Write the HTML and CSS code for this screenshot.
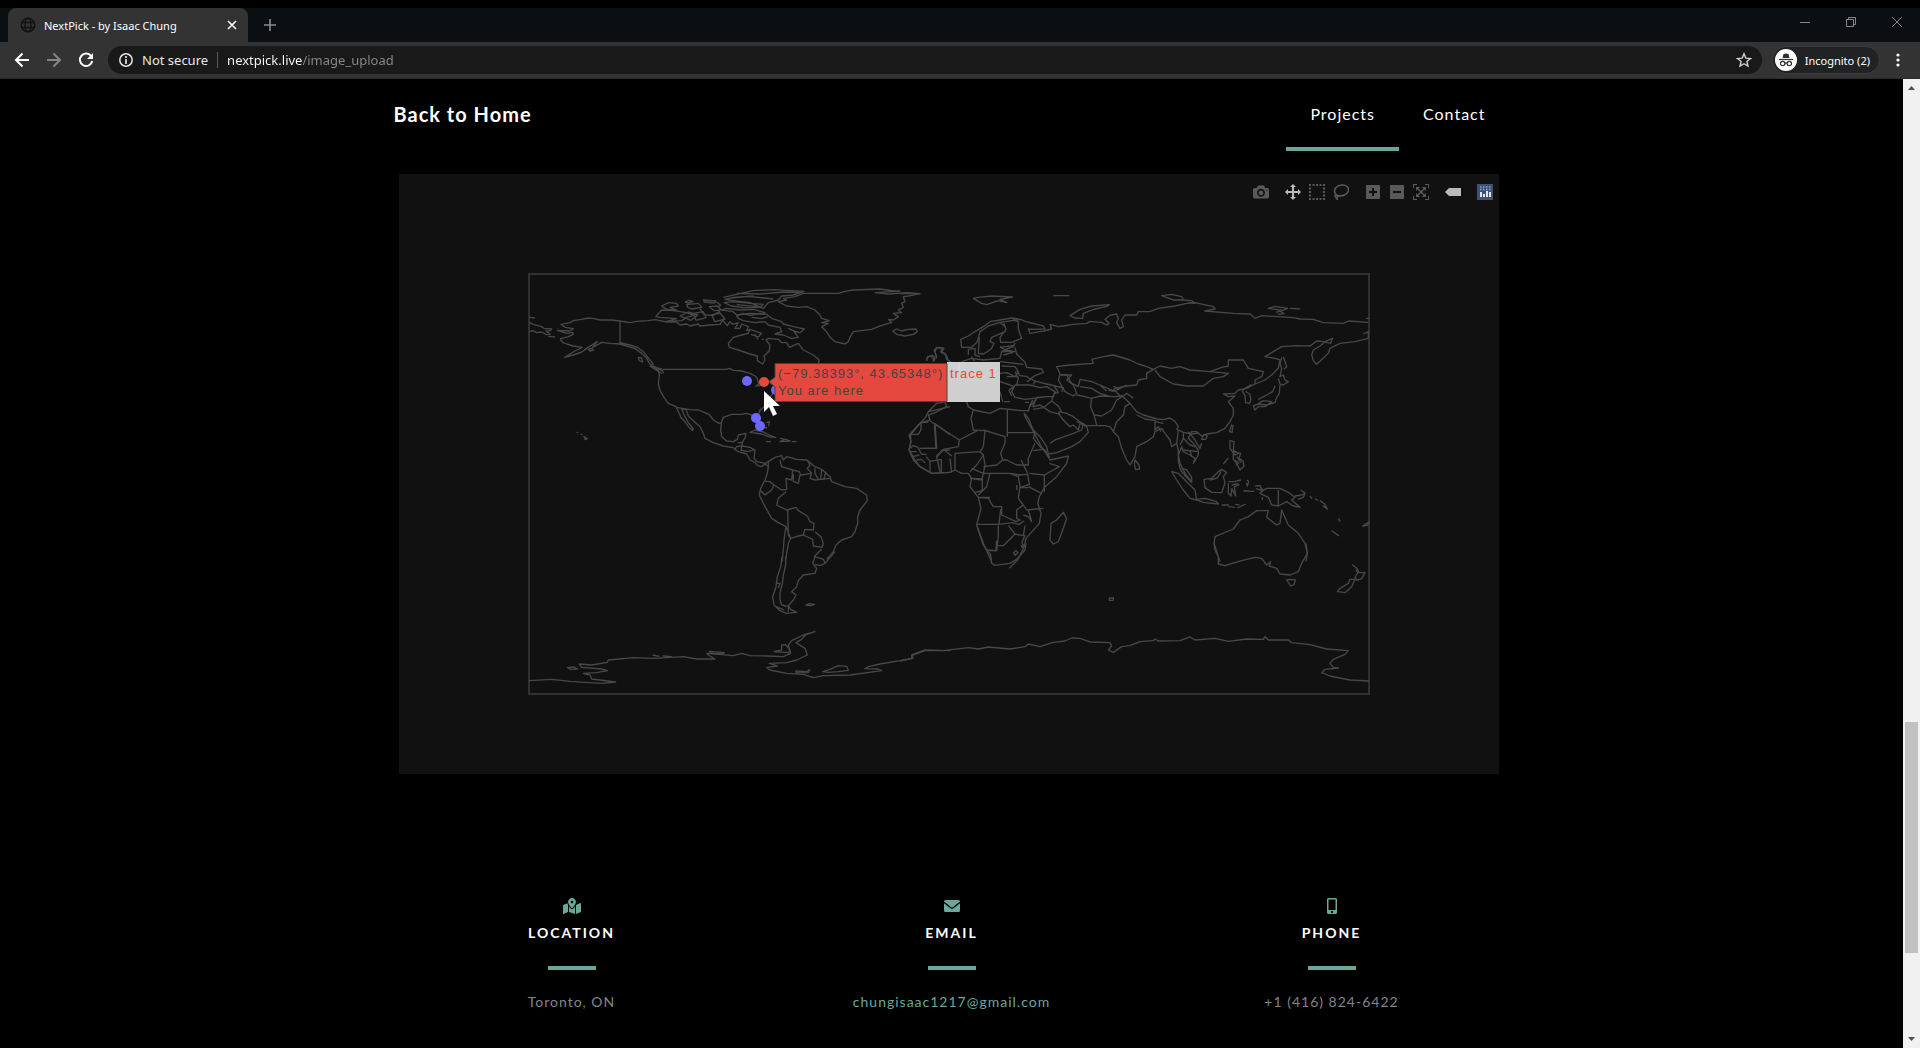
FILE: index.html
```html
<!DOCTYPE html>
<html lang="en">
<head>
<meta charset="utf-8">
<title>NextPick - by Isaac Chung</title>
<link rel="stylesheet" href="styles.css">
</head>
<body>
<header class="browser">
  <div class="tabstrip">
    <div class="tab">
      <svg class="globe" viewBox="0 0 16 16"><g fill="none" stroke="#111" stroke-width="1.4"><circle cx="8" cy="8" r="6.8"/><ellipse cx="8" cy="8" rx="3" ry="6.8"/><path d="M1.5 5.5h13M1.5 10.5h13"/></g></svg>
      <span class="tab-title">NextPick - by Isaac Chung</span>
      <button class="icon-btn" aria-label="Close tab"><svg width="10" height="10" viewBox="0 0 10 10"><path d="M1 1l8 8M9 1l-8 8" stroke="#fff" stroke-width="1.6"/></svg></button>
    </div>
    <button class="icon-btn new-tab" aria-label="New tab"><svg width="12" height="12" viewBox="0 0 12 12"><path d="M6 0v12M0 6h12" stroke="#8b8d8f" stroke-width="1.6"/></svg></button>
    <div class="window-buttons">
      <button class="icon-btn" aria-label="Minimize"><svg width="10" height="10" viewBox="0 0 10 10"><path d="M0 5.5h10" stroke="#85888a"/></svg></button>
      <button class="icon-btn" aria-label="Restore"><svg width="10" height="10" viewBox="0 0 10 10"><path d="M.5 2.5h7v7h-7zM2.5 2.5v-2h7v7h-2" fill="none" stroke="#85888a"/></svg></button>
      <button class="icon-btn" aria-label="Close"><svg width="10" height="10" viewBox="0 0 10 10"><path d="M0 0l10 10M10 0L0 10" stroke="#85888a"/></svg></button>
    </div>
  </div>
  <div class="toolbar">
    <button class="icon-btn" aria-label="Back"><svg width="16" height="16" viewBox="0 0 16 16"><path d="M15 8H2M8.500 1.500L2 8l6.500 6.500" fill="none" stroke="#fff" stroke-width="2"/></svg></button>
    <button class="icon-btn" aria-label="Forward"><svg width="16" height="16" viewBox="0 0 16 16"><path d="M1 8h13M7.500 1.500L14 8l-6.500 6.500" fill="none" stroke="#858585" stroke-width="2"/></svg></button>
    <button class="icon-btn" aria-label="Reload"><svg width="16" height="16" viewBox="0 0 16 16"><path d="M13.200 4.200A6.200 6.200 0 1 0 14.200 9" fill="none" stroke="#fff" stroke-width="2"/><path d="M15 1v6H9z" fill="#fff"/></svg></button>
    <div class="omnibox">
      <svg width="16" height="16" viewBox="0 0 16 16"><circle cx="8" cy="8" r="6.200" fill="none" stroke="#e4e4e4" stroke-width="1.500"/><path d="M8 7v5M8 4v2" stroke="#e4e4e4" stroke-width="1.700"/></svg>
      <label class="security" for="url">Not secure</label>
      <input id="url" class="url" type="text" value="nextpick.live/image_upload">
      <button class="icon-btn" aria-label="Bookmark"><svg width="16" height="16" viewBox="0 0 16 16"><path d="M8 1.800l1.800 4.300 4.700.4-3.600 3 1.100 4.600L8 11.700l-4 2.400 1.100-4.600-3.600-3 4.700-.4z" fill="none" stroke="#d0d0d0" stroke-width="1.400"/></svg></button>
    </div>
    <button class="incognito"><svg width="22" height="22" viewBox="0 0 22 22"><circle cx="11" cy="11" r="11" fill="#fff"/><path d="M7.500 9l1-4q2.500-1 5 0l1 4z" fill="#2d2f31"/><path d="M4 10.500h14" stroke="#2d2f31" stroke-width="1.200"/><g fill="none" stroke="#2d2f31" stroke-width="1.200"><circle cx="7.700" cy="14.500" r="2.200"/><circle cx="14.300" cy="14.500" r="2.200"/><path d="M9.900 14.200q1.100-.7 2.200 0"/></g></svg><span>Incognito (2)</span></button>
    <button class="icon-btn" aria-label="Menu"><svg width="4" height="14" viewBox="0 0 4 14"><g fill="#fff"><circle cx="2" cy="2" r="1.600"/><circle cx="2" cy="7" r="1.600"/><circle cx="2" cy="12" r="1.600"/></g></svg></button>
  </div>
</header>
<div class="viewport">
<div class="page">
  <nav class="nav">
    <a class="brand" href="#">Back to Home</a>
    <a class="nav-link active" href="#projects">Projects</a>
    <a class="nav-link" href="#contact">Contact</a>
  </nav>
  <main class="plot-area">
  <div class="plot">
    <div class="modebar">
      <button class="mode" aria-label="Download plot"><svg viewBox="0 0 1000 1000"><path transform="matrix(1 0 0 -1 0 850)" d="m500 450c-83 0-150-67-150-150 0-83 67-150 150-150 83 0 150 67 150 150 0 83-67 150-150 150z m400 150h-120c-16 0-34 13-39 29l-31 93c-6 15-23 28-40 28h-340c-16 0-34-13-39-28l-31-94c-6-15-23-28-40-28h-120c-55 0-100-45-100-100v-450c0-55 45-100 100-100h800c55 0 100 45 100 100v450c0 55-45 100-100 100z m-400-550c-138 0-250 112-250 250 0 138 112 250 250 250 138 0 250-112 250-250 0-138-112-250-250-250z m365 380c-19 0-35 16-35 35 0 19 16 35 35 35 19 0 35-16 35-35 0-19-16-35-35-35z"/></svg></button>
      <div class="mode-group">
        <button class="mode on" aria-label="Pan"><svg viewBox="0 0 1000 1000"><path transform="matrix(1 0 0 -1 0 850)" d="m1000 350l-187 188 0-125-250 0 0 250 125 0-188 187-187-187 125 0 0-250-250 0 0 125-188-188 186-187 0 125 252 0 0-250-125 0 187-188 188 188-125 0 0 250 250 0 0-126 187 188z"/></svg></button>
        <button class="mode" aria-label="Box select"><svg viewBox="0 0 16 16"><path d="M0 1h16M0 15h16M1 0v16M15 0v16" stroke="#595959" stroke-width="2" stroke-dasharray="2 1.500"/></svg></button>
        <button class="mode" aria-label="Lasso select"><svg viewBox="0 0 16 16"><path d="M4.500 11.500C1 10 .8 6 3 3.500S11-.2 14 2.500s1 7-2.500 8.500-5 .8-7 .5m0 0c-2.500-1.800-3.500.8-1.500 1.600 2.500.4 2.500-1.100 1.500-1.600m-1.500 1.600q0 1.800 2 2.400" fill="none" stroke="#595959" stroke-width="1.600"/></svg></button>
      </div>
      <div class="mode-group">
        <button class="mode" aria-label="Zoom in"><svg viewBox="-62 0 1000 1000"><path transform="matrix(1 0 0 -1 0 850)" d="m1 787l0-875 875 0 0 875-875 0z m687-500l-187 0 0-187-125 0 0 187-188 0 0 125 188 0 0 187 125 0 0-187 187 0 0-125z"/></svg></button>
        <button class="mode" aria-label="Zoom out"><svg viewBox="-62 0 1000 1000"><path transform="matrix(1 0 0 -1 0 850)" d="m0 788l0-876 875 0 0 876-875 0z m688-500l-500 0 0 125 500 0 0-125z"/></svg></button>
        <button class="mode" aria-label="Reset"><svg viewBox="0 0 1000 1000"><path transform="matrix(1 0 0 -1 0 850)" d="m250 850l-187 0-63 0 0-62 0-188 63 0 0 188 187 0 0 62z m688 0l-188 0 0-62 188 0 0-188 62 0 0 188 0 62-62 0z m-875-938l0 188-63 0 0-188 0-62 63 0 187 0 0 62-187 0z m875 188l0-188-188 0 0-62 188 0 62 0 0 62 0 188-62 0z m-125 188l-1 0-93-94-156 156 156 156 92-93 2 0 0 250-250 0 0-2 93-92-156-156-156 156 94 92 0 2-250 0 0-250 0 0 93 93 157-156-157-156-93 94 0 0 0-250 250 0 0 0-94 93 156 157 156-157-93-93 0 0 250 0 0 250z"/></svg></button>
      </div>
      <button class="mode on" aria-label="Toggle hover"><svg viewBox="0 0 1500 1500"><path transform="matrix(1 0 0 -1 0 1100)" d="m375 725l0 0-375-375 375-374 0-1 1125 0 0 750-1125 0z"/></svg></button>
      <a class="mode" href="#plotly" aria-label="Plotly"><svg viewBox="0 0 16 16"><path d="M0 0h16v16H0z" fill="#3f4f75"/><path d="M4 8v5M7 10v3M10 7v6M13 8v5" stroke="#fff" stroke-width="1.700"/><path d="M3 3h11M3 5.500h11" stroke="#7fa7c8" stroke-width="1.300" stroke-dasharray="1.500"/></svg></a>
    </div>
    <svg class="map" viewBox="0 0 1100 600" role="img" aria-label="World map">
      <rect x="130" y="100" width="840" height="420" fill="none" stroke="#303030" stroke-width="2"/>
      <!-- north west: North America, Greenland, northern South America -->
      <g class="land" transform="translate(121 86) scale(.33333)">
        <path d="M27 172L45 174M27 187L40 193 65 200 72 205 95 207 92 212 78 213 90 222 80 224 65 216 50 218 38 212 27 215M85 229L105 231"/>
        <path d="M300 183L275 180 240 180 222 176 205 174 185 178 160 182 150 188 123 193 135 202 160 206 150 213 112 211 140 220 158 217 160 223 145 230 122 236 122 240 130 248 140 252 160 258 187 262 165 273 134 292 160 285 185 276 205 262 220 252 232 244 222 256 218 262 245 247 270 250 300 252V183"/>
        <path d="M205 268l10-3 5 5-10 3zM300 252L320 258 345 266 365 280 380 295 388 310 400 322 428 332 430 340M300 248L330 255 352 262 372 277 388 298 400 312 390 318 402 326 425 340M355 292l10 2 3 12-10-4zM388 312l25 12 14 4"/>
        <path d="M428 328H620L628 325 640 331 665 333 690 340 705 348 712 355 716 372 708 378 725 375 735 368 752 362"/>
        <path d="M400 322L415 332 418 345 415 372 420 392 432 412 445 430 468 440 480 465 482 472 495 485 505 500 518 511 520 507 505 488 495 470 485 447 498 448 505 468 520 482 540 500 550 520 555 535 580 548 610 558 640 563 655 575 680 582 690 600 705 607 712 616 725 620 735 612 745 620"/>
        <path d="M468 442L510 449 535 450 555 458 568 464 580 480 597 490 604 488 610 472 635 463 665 463 680 460 695 465 705 478 715 495 722 490 715 465 720 450 740 435 745 420 755 405 765 395"/>
        <path d="M604 488L602 510 605 530 620 543 640 545 652 538 655 525 678 520 676 532 668 545 665 558 650 560 643 570M665 558L690 562 705 570 702 595 712 605 735 610 745 605M653 548h14M668 545l-5 25 20 5 22-6"/>
        <path d="M690 517L705 510 730 516 750 526 768 533 745 530 725 522zM738 545h15M780 535l20 4 10 4-30 2 12-6M815 545h14M738 488l10-3-2 14M730 500l12 5M170 516l4 3M182 522l6 3M192 530l10 6-6 3z"/>
        <path d="M300 183L330 188 350 184 385 182 405 179 440 186 470 186 480 195 500 192 510 198 535 192 540 198 570 195 600 193 607 180 622 197 630 185 638 193 655 188 645 205 660 205 665 192 685 200 680 212 690 208 685 220 665 225 640 232 625 250 628 262 655 270 690 282 712 288 712 302 728 312 735 300 732 288 748 272 750 255 738 240 745 235 775 238 785 248 800 248 808 262 835 250 850 270 880 285 898 300 895 310 860 315"/>
        <path d="M407 170L425 150 460 152 500 158 520 166 500 172 485 182 440 184 470 176 420 172zM425 138L445 128 470 130 475 138 450 142 470 150 440 148zM495 126l12-5 12 4-14 4zM500 134l35-4 10 12-30 5-12-5zM550 120l38 3-5 6-30-3zM568 140l25-2 10 12-20 2zM520 160l30-5 8 18-30 8zM575 165l25-6 15 18-30 8zM540 146l12 18 26 3 22-14M590 126l12 10-10 5M480 168l25-12 28 9-20 16z"/>
        <path d="M605 150L620 145 660 150 700 148 735 158 730 162 690 160 650 165 640 155zM612 128L640 125 690 130 730 133 720 142 670 143 635 138zM610 112L650 103 700 92 760 89 852 94 820 105 785 108 775 120 745 128 730 145 690 128 640 122 615 118 640 112 700 108M650 100L720 102 790 96 850 98M625 115l60-6 75 8M650 134l60 6"/>
        <path d="M650 168L670 160 690 166 720 160 740 163 755 175 785 185 790 192 820 200 853 207 840 218 820 212 835 232 815 235 790 225 765 222 785 215 780 202 745 195 735 185 705 188 670 182 655 175zM695 172l30 4 18-6M805 205l25 12M690 208l35 12-10 10-22-7M725 238h6M704 222l10 16"/>
        <path d="M775 125L800 120 790 115 825 110 850 100 955 100 975 94 1000 90 1080 87 1120 93 1140 93 1065 98 1105 102 1160 98 1200 101 1165 108 1150 110 1155 125 1145 130 1150 142 1135 150 1145 158 1120 160 1135 170 1120 180 1105 178 1115 188 1095 193 1075 200 1055 208 1030 211 1000 215 990 232 985 245 975 252 945 245 930 232 920 215 905 200 925 190 905 188 928 182 905 175 900 165 885 150 860 140 835 142 800 138z"/>
        <path d="M1118 213L1130 207 1145 213 1165 208 1188 207 1192 215 1180 223 1155 228 1130 223zM1220 302L1222 292 1232 288 1240 295 1240 305M1250 290L1243 270 1250 262 1268 264 1262 275 1275 280 1280 298 1290 305"/>
        <path d="M745 620L745 605 765 592 785 587 790 600 800 590 830 598 860 600 885 620 905 628 930 650 935 665 975 680 1010 685 1040 705 1042 722 1020 750 1013 770 1013 790 1005 815 995 830 965 840 948 855 940 875 920 898M745 620L742 640 735 660 722 685 718 705 735 740 755 775 775 788 798 800 792 840 790 870 786 905"/>
        <path d="M735 664L750 665 762 675 785 690 800 688 798 655 815 660 818 630 785 620 780 600M762 675L755 690 735 705 722 692M798 695L775 715 770 735 790 745 800 750 828 742 835 752 862 768 870 785 882 790 880 810 855 808 850 825 835 828 812 835 805 825 803 750M798 800L812 835 805 850 797 900M850 825L878 838 880 858 905 862 910 852 903 830 885 815M882 890L905 868M818 630L838 635 842 645 875 640 870 655 885 660 930 655M862 600L870 615 862 625 875 640M885 625L885 640 895 658M905 630L902 655M918 635L912 655M820 642v22l15 6 5-25"/>
        <path d="M1270 427L1250 430 1225 455 1215 475 1190 500 1172 520 1172 545 1168 570 1185 600 1200 620 1235 640 1290 637M1225 455L1290 440M1225 487h-22v22l-8 14h-23M1243 490l47 34M1245 490l5 75h-46M1168 565l12-8 14 5 10 20 16 2M1170 575h20M1190 600l14-2 12 10M1218 590l12 14 0 32M1230 604l34-6M1264 598v38M1250 590l20-20h20"/>
      </g>
      <!-- north east: Europe, Africa, Asia -->
      <g class="land" transform="translate(501 86) scale(.33333)">
        <path d="M0 101L60 101M220 115L235 112 275 108 338 111 300 118 320 128 295 122 260 134 245 130zM460 107h48M510 167L540 148 575 138 628 134 620 139 585 147 550 160 548 175 525 174zM785 107L815 103 845 110 850 120 820 120zM845 120l30 2 10 8-20-2M1105 145l20-6 38 6-15 6zM1170 145l30 2M1128 157l12-4 12 8-18 2"/>
        <path d="M182 238L185 262 215 262 232 245 240 215 265 198 300 187 315 185 362 178 335 174 300 180 270 185 250 200 225 215 205 228zM238 232L235 280 250 282 262 275 275 265 282 250 270 245 275 232 315 215 318 208 312 190M300 187L315 200M318 208L300 232 302 247 335 247 365 235 355 208 355 185 340 180"/>
        <path d="M362 178L375 184 430 198 435 207 400 208 385 207 390 220 420 215 432 213 455 207 450 193 475 200 490 198 520 193 560 190 570 184 605 187 620 195 627 190 615 178 632 165 650 162 655 175 650 188 660 205 670 200 665 180 675 165 710 165 715 155 750 155 775 145 825 138 860 130 885 128 940 140 945 147 915 153 1000 160 1050 162 1065 175 1085 167 1180 173 1200 177 1240 178 1270 188 1330 190 1345 183 1405 187M1398 175h10"/>
        <path d="M1405 235L1365 245 1320 250 1290 265 1285 280 1250 313 1240 302 1235 285 1240 270 1260 258 1275 245 1298 235 1292 250 1270 245 1250 243 1230 258 1190 257 1145 260 1120 275 1095 290 1125 295 1140 300 1135 325 1115 345 1095 360 1065 372M1405 235V215L1390 222"/>
        <path d="M1145 293L1140 310 1145 325 1140 350 1150 345 1155 360 1165 365 1150 375 1140 372 1135 355M1140 375L1138 400 1130 412 1125 428 1100 435 1075 432 1060 437 1065 450 1075 440 1095 440 1115 425 1090 422 1075 430M1075 418L1100 405 1118 395 1125 378M1150 290l10 30-8 8M1055 374l-22 12-6 8 8 12 2 22 12 2 4-12-4-16-12-8"/>
        <path d="M1065 372L1040 385 1015 390 1005 400 970 402 985 410 1005 408 985 425 1000 445 1000 465 990 485 975 505 950 518 920 522 905 528 890 515 875 515 865 535 880 550 895 570 895 585 880 610 885 595 870 585 850 575 845 560 835 585 840 610 855 640 875 665 865 655 845 635 840 625 835 600 835 570 830 550 815 560 810 540 795 520 785 505 765 515 760 530 740 545 710 560 705 590 690 615 680 600 665 565 655 530 640 515 630 500 615 497 560 497 545 490 520 470 500 460 480 455 475 460 490 480 510 500 520 495 535 510 540 490 560 500 565 517 540 545 515 560 470 578 445 582 440 560 420 530 400 510 385 475 375 462"/>
        <path d="M905 538l12 0 5-10-10-5zM988 515l7-20 4 2-3 20zM705 600l12 15 2 12-12 2-4-15zM990 542l12 3-2 25 15 10-10 5-15-20zM1000 575l22 5-5 15 12 8 3 15-12 12-10-20-10-12zM1010 590l14 18M970 612l15-18M1002 600l14 8-8 8"/>
        <path d="M815 635L835 640 860 665 885 690 890 720 870 715 850 690 830 660zM887 718L915 715 950 725 955 732 910 727zM845 625l15 5 15 22 0 15-22-22M912 658L935 655 955 635 965 628 980 637 970 650 975 668 965 698 935 697 915 683zM930 660l22-6 12-20M985 665l18 0 20-5M985 670l0 30 8 8 2-22 12 22-4-28 15-6M995 675l20-4M1040 660l6 4-4 14-3-8M1030 693h18M1048 694h15M965 735l22 0M985 740l20 2M1012 744l25-12M1006 733l12 2"/>
        <path d="M1065 678L1080 677 1088 692 1100 685 1140 685 1165 697 1185 712 1175 720 1200 742 1180 738 1160 725 1135 738 1115 735 1105 712 1080 700 1088 692 1068 686M1135 690V735M1185 708L1205 705 1215 700 1210 712 1195 718M1202 690l14 10M1230 708l6 8M1245 717l10 4M1260 722l14 10 8 15-14-10M1087 712v8M1315 775l6 10M1295 812l22 16M1388 798l12-8 8-4-6 10z"/>
        <path d="M475 330L470 320 510 315 580 310 575 298 610 290 640 285 690 300 715 312 740 320 760 328 740 340 740 355 715 360 710 375 680 378 645 385 640 392 600 375 575 365 540 358 535 380 515 370 500 345 480 343zM760 328L780 318 815 325 840 320 870 330 930 335 985 340 970 350 940 355 910 378 860 378 820 372 780 350 765 330M930 335L965 322 985 318 985 300 1030 300 1045 325 1090 335 1085 350 1065 360 1065 372"/>
        <path d="M480 345L515 345 500 360 520 375 530 400 520 408 495 395 475 360zM530 405L555 410 575 415 600 408 640 410 670 408 680 400 700 415M540 380L575 385 600 400 625 408M645 392L660 408M600 375l20 18M640 380l20 6-20 8-15-4M660 385l20-10M575 415L572 440 582 465 605 468 635 450 650 420 670 408M582 465L590 495M690 430L675 440 670 465 650 485 640 515M663 405l27 25 20 25 20 10 40 12 20 2 20-5 15 10 10 15-5 8 20 10 25 5 20-3"/>
        <path d="M710 465l25 12 32 5M765 480l0 30 10-10 8 15M790 490l-25-5M835 510l-5 40M850 520l0 15 20 20 15 5M850 535l-10 20M865 515l20 25 15 25 5-15M850 570l45 5M870 572l5 18M460 405l-5 18-25 20-30 5M455 423l20 15 10 18"/>
        <path d="M205 285L205 268 225 265 225 285 240 290M185 305L215 295 250 300 300 295 305 275 325 265 340 260 345 248M300 262l40-5M305 275h40M345 262l5 20 25 25 5 15 45 5 5 10-25 10-15 10-10-8-20-2-10-15M300 305l70 8M310 285l30-8M305 318l40 2 10 15-10 15-25-12-20 2M320 350l35 0M345 335l10 20-5 20M180 305l-5 22 10 8M215 290l8 14M110 295l-5-20 5-12 22 2-8 12 15 8 5 15 12 10M80 303l2-12 15-5 8 8-3 10M300 260l15 10 28 4"/>
        <path d="M345 375L335 395 345 412 375 418 400 415 440 410 460 410 465 395 440 380 420 383 390 375zM380 365l15-8 10 8-5 8M400 362l40 10 50 12-5 12M460 375l15 22-15 5M300 395l8 30M300 365l30 10 12 5-15 10 8 18M312 425h18M375 427h12M440 410l-30 2-12 30M390 440l20-25M400 440l20-5 30 20 30 8M385 455l5-20 8-15"/>
        <path d="M100 425L135 425 140 440 100 460 85 465 90 480 60 490 40 515 27 525 33 545 27 570 40 600 60 620 95 640 150 637 165 630 185 640 205 640 215 655 210 680 235 712 243 745 230 795 250 850 275 905M200 425l5 15 15 10 50 10 30-15 65 7 20 0M220 450L213 475 220 510 250 512M322 450V530M322 518H405M250 510L315 530 315 550 302 580 308 600 290 615 250 620M405 518L400 535 420 560 440 575M405 550l-20 45 0 20-35 0-30-15-12 0M372 458l5 15 25 45 20 38 20 30 8 14 55-12-5 22-30 40-35 30-17 30-5 20 10 30-5 30-40 45-5 25-20 40-25 25"/>
        <path d="M90 483L178 540 175 560 130 568 108 590M178 540L232 512M103 490L108 565 60 565M110 590l10 46M150 595l5 42M165 580l75-5 10 10-20 30-20 20M165 580l0 50M240 575l10-15 5-48M250 585l5 30-5 25 80 0 30 5M130 568l25 20M38 590l20-5"/>
        <path d="M215 625l35 15-5 20-35-5M215 655l32 2 0 35-22 5M270 640l-10 40-25 25M330 640l25 10 5 30-5 35 15 20-20 15 0 25 10 5-12 5-43-20 0-25-25 0-15-25-25-2M235 712h35M355 645l28-2 5 30-28 10M388 640l45 5 45-25-30-10M383 640l-20-40M400 572l30-4 20 24M433 645v50M385 680l40 20M360 683h25M370 735l10 15 50-5M385 750l10 35-10-15-15-5M302 748l-5 45H230M297 793l40-5 20 5 15-10M295 797l0 30-5 45-20 0M325 797l20 25-20 20-15 15-18 0M345 822l25 5 5-30M375 825l-10 25M340 878l8-6 6 6-8 8zM365 850l6 6-4 6-4-6M350 690v-15"/>
        <path d="M490 757L500 775 490 805 475 845 460 852 450 840 453 790 470 780zM530 485l20 5-5 20-25 10-55 20-15 10"/>
        <path d="M960 905L942 850 945 830 1000 807 1020 780 1045 770 1070 752 1105 752 1100 772 1130 795 1140 790 1145 750 1165 795 1195 820 1215 850 1222 880 1218 905"/>
      </g>
      <!-- south west: southern South America and Antarctica -->
      <g class="land" transform="translate(121 266) scale(.33333)">
        <path d="M786 350L782 380 772 410 768 440 758 470 762 495 780 512 800 520 830 517 812 508 805 497 820 480 828 465 815 455 830 440 835 422 850 405 885 400 890 385 878 370 885 350 910 358 915 370 900 377 885 373M915 370L945 335M797 350L797 375 790 405 787 430 780 460 780 480 785 495 805 500V515M768 430h12l-5 15M768 500l25 10M858 495l12-4 14 2-12 4z"/>
        <path d="M27 722L95 718 150 724 195 727 245 730 287 726 215 717 210 705 190 700 230 698 262 692 245 687 185 682 178 672 215 675 262 667 265 660 340 653 400 655 490 650 530 657 585 657 565 645 560 640 640 647 665 640 690 647 740 648 790 650 812 640 805 615 815 602 850 585 885 575 855 585 845 598 828 608 855 625 862 645 830 660 800 668 748 670 772 678 740 683 750 690 800 700 850 703 880 713 910 707 990 705 1085 692 1075 687 1035 686 1045 680 1080 672 1140 662 1175 655 1175 645 1215 630 1290 632"/>
        <path d="M142 683l20-2 10 6-20 1zM568 634l45 4-5 3-30-1zM762 635L785 630 785 615 797 614 810 630 805 638zM398 645l20 4M428 648l28 2M825 693l35 2 8-6-2 8-40 2M908 695l22-7 25-11 25 2 5 12-30 4-30 2z"/>
      </g>
      <!-- south east: southern Africa, Australia and Antarctica -->
      <g class="land" transform="translate(501 266) scale(.33333)">
        <path d="M232 262L250 315 272 345 275 370 285 376 330 370 350 358 375 330 378 310M260 330l28 2 2-30M942 310L945 330 955 350 955 372 975 377 1025 362 1065 352 1085 355 1100 375 1112 365 1108 378 1130 385 1140 402 1170 405 1195 395 1205 370 1222 340 1218 310M1160 420l12-2 14 2-4 14-10 4zM1357 374l15 12 5 12 18 0-10 18-15 5-5-10 8-12-5-10M1365 418L1355 440 1335 458 1312 455 1320 445 1345 430 1350 418zM628 474h12v7h-12z"/>
        <path d="M0 663L38 655 38 645 75 632 130 632 205 623 235 627 265 621 330 627 375 620 385 612 420 620 460 607 495 603 515 594 540 595 570 606 630 608 635 618 625 630 640 637 665 620 690 617 720 605 760 602 765 597 775 603 840 602 870 591 885 600 945 595 985 604 1040 597 1090 598 1095 590 1105 600 1165 600 1175 608 1230 614 1280 627 1345 632 1335 643 1300 658 1290 670 1300 682 1315 684 1275 688 1265 698 1290 708 1350 720 1407 723"/>
      </g>
      <g fill="#6c67fb"><circle cx="348" cy="207" r="5"/><circle cx="377" cy="216" r="5"/><circle cx="357" cy="244" r="5"/><circle cx="361" cy="252" r="5"/></g>
      <circle cx="365" cy="208" r="5" fill="#e5483e"/>
      <rect x="548" y="188" width="53" height="40" fill="#fff" fill-opacity=".8"/>
      <path d="M370 208L376 203V189.500H548V227.500H376V213z" fill="#e5483e" stroke="#444"/>
      <g class="hover-text"><text x="379" y="204">(−79.38393°, 43.65348°)</text><text x="379" y="221">You are here</text><text class="trace" x="551" y="204">trace 1</text></g>
      <path d="M365 217v21l5-5 4 9 4-2-4-8h7z" fill="#fff"/>
    </svg>
  </div>
  </main>
  <footer class="contacts">
    <section class="contact">
      <svg width="18" height="16" viewBox="0 0 576 512"><path fill="#6aa899" d="M288 0c-69.590 0-126 56.410-126 126 0 56.260 82.350 158.800 113.900 196.020 6.390 7.540 17.820 7.540 24.200 0C331.650 284.800 414 182.260 414 126 414 56.410 357.590 0 288 0zm0 168c-23.200 0-42-18.800-42-42s18.800-42 42-42 42 18.800 42 42-18.800 42-42 42zM20.120 215.950A32.006 32.006 0 0 0 0 245.660v250.320c0 11.320 11.430 19.060 21.940 14.860L160 448V214.920c-8.840-15.980-16.070-31.540-21.250-46.420L20.120 215.950zM288 359.670c-14.070 0-27.380-6.180-36.510-16.960-19.660-23.200-40.570-49.620-59.490-76.720v182l192 64V266c-18.920 27.090-39.820 53.520-59.490 76.720-9.130 10.770-22.440 16.950-36.510 16.950zm266.060-198.510L416 224v288l139.880-55.950A31.996 31.996 0 0 0 576 426.340V176.020c0-11.320-11.430-19.060-21.940-14.860z"/></svg>
      <h4>Location</h4><hr><p>Toronto, ON</p>
    </section>
    <section class="contact">
      <svg width="16" height="16" viewBox="0 0 16 16"><path d="M1.500 2h13Q16 2 16 3.500L8.700 9.300q-.7.500-1.400 0L0 3.500Q0 2 1.500 2zM0 5.200l6.800 5.300q1.200.8 2.400 0L16 5.200v7.300q0 1.500-1.500 1.500h-13Q0 14 0 12.500z" fill="#6aa899"/></svg>
      <h4>Email</h4><hr><p><a href="mailto:chungisaac1217@gmail.com">chungisaac1217@gmail.com</a></p>
    </section>
    <section class="contact">
      <svg width="10" height="16" viewBox="0 0 10 16"><path fill="#6aa899" fill-rule="evenodd" d="M1.500 0h7Q10 0 10 1.500v13Q10 16 8.500 16h-7Q0 16 0 14.500v-13Q0 0 1.500 0zM1.500 1.500V12h7V1.500zM4 13v2h2v-2z"/></svg>
      <h4>Phone</h4><hr><p>+1 (416) 824-6422</p>
    </section>
  </footer>
</div>
<div class="scrollbar">
  <svg width="7" height="4" viewBox="0 0 7 4"><path d="M0 4L3.500 0 7 4z" fill="#505050"/></svg>
  <div class="track"><div class="thumb"></div></div>
  <svg width="7" height="4" viewBox="0 0 7 4"><path d="M0 0L3.500 4 7 0z" fill="#505050"/></svg>
</div>
</div>
</body>
</html>
```
FILE: styles.css
```css
* { box-sizing: border-box; }
body {
  margin: 0;
  min-height: 100vh;
  display: flex;
  flex-direction: column;
  background: #000;
  color: #fff;
  font-family: Lato, "Open Sans", sans-serif;
}
button { padding: 0; border: 0; background: none; color: inherit; font: inherit; }
a { color: inherit; text-decoration: none; }
svg { display: block; }

.browser { font-family: "Noto Sans", "Open Sans", sans-serif; border-top: 8px solid #000; }
.tabstrip { display: flex; height: 34px; padding-left: 8px; background: #0b0f11; }
.tab {
  display: flex;
  align-items: center;
  width: 240px;
  padding: 0 11px 0 12px;
  border-radius: 8px 8px 0 0;
  background: #333;
}
.globe { width: 16px; height: 16px; margin-right: 8px; }
.tab-title { flex: 1; font-size: 11px; white-space: nowrap; }
.icon-btn { display: grid; place-items: center; }
.new-tab { margin-left: 16px; }
.window-buttons { display: flex; gap: 36px; margin-left: auto; padding: 0 18px 6px 0; }
.toolbar {
  display: flex;
  align-items: center;
  gap: 16px;
  height: 37px;
  padding: 0 20px 0 14px;
  border-bottom: 1px solid #2a2a2a;
  background: #333;
}
.omnibox {
  flex: 1;
  display: flex;
  align-items: center;
  height: 28px;
  margin-left: -2px;
  padding: 0 10px;
  border-radius: 14px;
  background: #191919;
  font-size: 13px;
}
.security { margin: 0 9px 0 8px; color: #e8e8e8; white-space: nowrap; }
.url {
  flex: 1;
  min-width: 0;
  height: 16px;
  padding: 0 0 0 9px;
  border: 0;
  border-left: 1px solid #5a5a5a;
  outline: 0;
  color: #fff;
  font: inherit;
  background: linear-gradient(90deg, #fff 84px, #8a8a8a 84px);
  background-clip: text;
  -webkit-text-fill-color: transparent;
}
.incognito {
  display: flex;
  align-items: center;
  gap: 8px;
  height: 28px;
  margin-left: -6px;
  padding: 0 9px 0 2px;
  border: 1px solid #3a3c3e;
  border-radius: 14px;
  background: #202224;
  font-size: 11px;
  white-space: nowrap;
}

.viewport { flex: 1; display: flex; }
.page { flex: 1; min-width: 0; }
.nav {
  display: flex;
  width: 100%;
  max-width: 1116px;
  height: 72px;
  margin: 0 auto;
  line-height: 70px;
}
.brand { margin-right: auto; font-size: 20px; font-weight: 700; letter-spacing: 1px; }
.nav-link { padding: 0 24px; border-bottom: 4px solid transparent; font-size: 16px; letter-spacing: 1px; }
.nav-link.active { border-color: #6fa49c; }

.plot-area { padding: 23px 5px 0 0; }
.plot { position: relative; max-width: 1100px; margin: 0 auto; background: #111; }
.modebar { position: absolute; top: 10px; right: 6px; display: flex; gap: 16px; }
.mode-group { display: flex; gap: 8px; }
.mode { width: 16px; height: 16px; fill: #595959; }
.mode.on { fill: #bababa; }
.map { width: 100%; }
.land { fill: none; stroke: #484848; stroke-width: 4; stroke-linejoin: round; }
.hover-text { font: 13px "Liberation Sans", Arial, sans-serif; letter-spacing: 1px; fill: #444; }
.trace { fill: #e5483e; }

.contacts {
  display: grid;
  grid-template-columns: repeat(3, 1fr);
  max-width: 1140px;
  margin: 0 auto;
  padding: 124px 0 32px;
}
.contact { display: flex; flex-direction: column; align-items: center; }
.contact h4 { margin: 8px 0 0; font-size: 14px; line-height: 22px; letter-spacing: 2px; text-transform: uppercase; }
.contact hr { width: 48px; height: 4px; margin: 22px 0 20px; border: 0; background: #6aa899; }
.contact p { margin: 0; color: #80858a; font-size: 14px; line-height: 24px; letter-spacing: 1px; }
.contact a { color: #6aa899; }

.scrollbar {
  display: flex;
  flex-direction: column;
  align-items: center;
  width: 17px;
  padding: 7px 2px;
  background: #f1f1f1;
}
.track { flex: 1; display: flex; flex-direction: column; justify-content: flex-end; width: 13px; padding: 6px 0 84px; }
.thumb { height: 27%; background: #c1c1c1; }
```
